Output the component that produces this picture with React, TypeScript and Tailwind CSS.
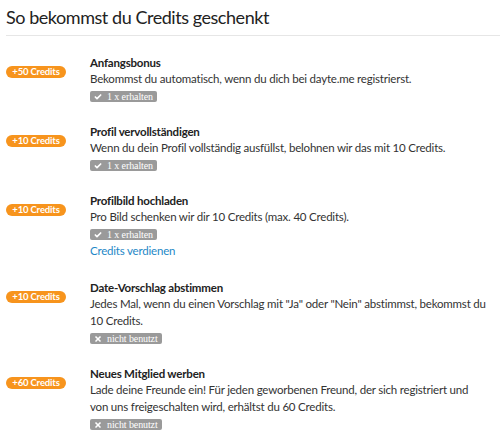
import { Check, X } from "lucide-react";

type Item = {
  credits: string;
  title: string;
  text: string;
  used: boolean;
  link?: string;
};

const items: Item[] = [
  {
    credits: "+50 Credits",
    title: "Anfangsbonus",
    text: "Bekommst du automatisch, wenn du dich bei dayte.me registrierst.",
    used: true,
  },
  {
    credits: "+10 Credits",
    title: "Profil vervollständigen",
    text: "Wenn du dein Profil vollständig ausfüllst, belohnen wir das mit 10 Credits.",
    used: true,
  },
  {
    credits: "+10 Credits",
    title: "Profilbild hochladen",
    text: "Pro Bild schenken wir dir 10 Credits (max. 40 Credits).",
    used: true,
    link: "Credits verdienen",
  },
  {
    credits: "+10 Credits",
    title: "Date-Vorschlag abstimmen",
    text: 'Jedes Mal, wenn du einen Vorschlag mit "Ja" oder "Nein" abstimmst, bekommst du 10 Credits.',
    used: false,
  },
  {
    credits: "+60 Credits",
    title: "Neues Mitglied werben",
    text: "Lade deine Freunde ein! Für jeden geworbenen Freund, der sich registriert und von uns freigeschalten wird, erhältst du 60 Credits.",
    used: false,
  },
];

function StatusTag({ used }: { used: boolean }) {
  return (
    <span className="mt-[4px] inline-flex h-[11px] items-center gap-[5px] rounded-[2px] bg-[#9a9a9a] px-[4px] font-['Liberation_Serif',serif] text-[10px] leading-none tracking-[-0.1px] text-white">
      {used ? (
        <Check className="h-[8px] w-[8px]" strokeWidth={5} />
      ) : (
        <X className="h-[8px] w-[8px]" strokeWidth={5} />
      )}
      {used ? "1 x erhalten" : "nicht benutzt"}
    </span>
  );
}

export default function App() {
  return (
    <div className="h-[439px] w-[500px] overflow-hidden bg-white font-['Lato',sans-serif] text-[#333]">
      <h1 className="ml-[6px] border-b border-[#e6e6e6] pb-[7px] pt-[7px] text-[18px] leading-[21px] tracking-[-0.45px] text-[#222]">
        So bekommst du Credits geschenkt
      </h1>
      <ul className="flex flex-col gap-[22px] pt-[19px]">
        {items.map((item) => (
          <li key={item.title} className="flex">
            <div className="w-[90px] shrink-0 pl-[6px] pt-[2px]">
              <span className="inline-flex h-[12px] w-[60px] items-center justify-center rounded-full bg-[#f7941d] text-[9.5px] font-bold tracking-[-0.15px] text-white">
                {item.credits}
              </span>
            </div>
            <div className="flex flex-1 flex-col items-start pr-[13px] text-[11.5px] leading-[17px] tracking-[-0.2px]">
              <h2 className="font-bold leading-[15px] text-[#222]">
                {item.title}
              </h2>
              <p>{item.text}</p>
              <StatusTag used={item.used} />
              {item.link ? (
                <a className="mt-[3px] leading-[15px] text-[#1e88c7]">
                  {item.link}
                </a>
              ) : null}
            </div>
          </li>
        ))}
      </ul>
    </div>
  );
}
